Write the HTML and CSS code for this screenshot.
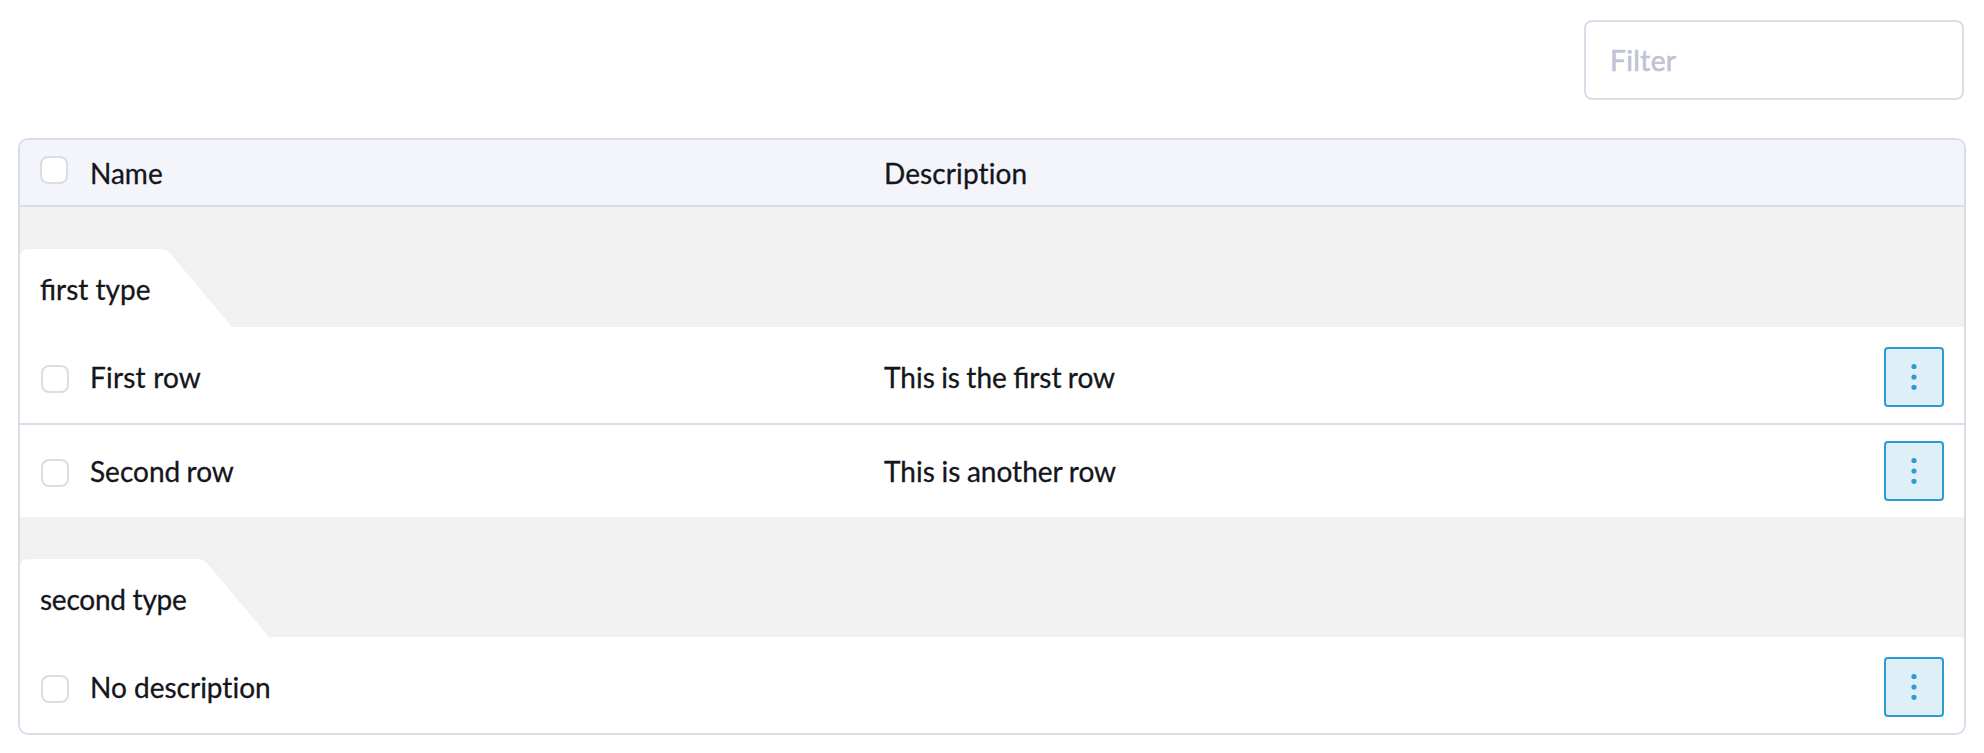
FILE: index.html
```html
<!DOCTYPE html>
<html lang="en">
<head>
<meta charset="utf-8">
<title>Grouped table</title>
<link rel="stylesheet" href="styles.css">
</head>
<body>
<div class="toolbar"><input class="filter" type="text" placeholder="Filter" aria-label="Filter"></div>
<div class="table">
  <div class="row head"><span class="check"></span><span class="name">Name</span><span class="desc plain wide">Description</span></div>
  <div class="group"><div class="tab">first type</div></div>
  <div class="row first divided"><span class="check"></span><span class="name loose">First row</span><span class="desc tight">This is the first row</span>
    <button class="more" aria-label="Actions"><svg width="6" height="28" viewBox="0 0 6 28"><circle cx="3" cy="3.5" r="2.6"/><circle cx="3" cy="14" r="2.6"/><circle cx="3" cy="24.3" r="2.6"/></svg></button></div>
  <div class="row"><span class="check"></span><span class="name tight">Second row</span><span class="desc snug">This is another row</span>
    <button class="more" aria-label="Actions"><svg width="6" height="28" viewBox="0 0 6 28"><circle cx="3" cy="3.5" r="2.6"/><circle cx="3" cy="14" r="2.6"/><circle cx="3" cy="24.3" r="2.6"/></svg></button></div>
  <div class="group"><div class="tab condensed">second type</div></div>
  <div class="row first"><span class="check"></span><span class="name plain">No description</span><span class="desc"></span>
    <button class="more" aria-label="Actions"><svg width="6" height="28" viewBox="0 0 6 28"><circle cx="3" cy="3.5" r="2.6"/><circle cx="3" cy="14" r="2.6"/><circle cx="3" cy="24.3" r="2.6"/></svg></button></div>
</div>
</body>
</html>
```
FILE: styles.css
```css
* { box-sizing: border-box; }
body {
  margin: 0;
  padding: 20px 18px 18px;
  background: #fff;
  color: #15151c;
  font: 400 28px/36px Lato, sans-serif;
  -webkit-text-stroke: 0.3px currentColor;
}
.toolbar {
  display: flex;
  justify-content: flex-end;
  padding-right: 2px;
  margin-bottom: 38px;
}
.filter {
  width: 380px;
  height: 80px;
  padding: 0 24px;
  border: 2px solid #dadde8;
  border-radius: 8px;
  background: #fff;
  font: inherit;
  letter-spacing: 0.4px;
}
.filter::placeholder { color: #bfc3d6; opacity: 1; -webkit-text-stroke: 0.6px #bfc3d6; }
.table {
  border: 2px solid #dadde8;
  border-radius: 10px;
  overflow: hidden;
}
.row {
  display: grid;
  grid-template-columns: 49px 794px 1fr 60px;
  align-items: center;
  height: 92px;
  padding: 0 20px 0 21px;
}
.row.first { height: 96px; padding-top: 4px; }
.row.divided { height: 98px; border-bottom: 2px solid #dadde8; }
.row.head {
  height: 67px;
  padding-left: 20px;
  grid-template-columns: 50px 794px 1fr;
  background: #f4f5fa;
  border-bottom: 2px solid #dadde8;
}
.check {
  width: 28px;
  height: 28px;
  margin-top: 4px;
  border: 2px solid #dadde8;
  border-radius: 8px;
  background: #fff;
}
.head .check { margin: 0 0 5px; }
.head .name, .head .desc { padding-top: 1px; }
.name, .desc { white-space: nowrap; }
.plain { font-variant-ligatures: none; }
.wide { letter-spacing: 0.1px; }
.loose { letter-spacing: 0.2px; }
.tight { word-spacing: -0.8px; }
.snug { word-spacing: -0.5px; }
.condensed { letter-spacing: -0.25px; }
.more {
  display: flex;
  align-items: center;
  justify-content: center;
  width: 60px;
  height: 60px;
  padding: 0;
  border: 2px solid #2d9bd2;
  border-radius: 4px;
  background: #dfeff8;
}
.more svg { fill: #2d9bd2; }
.group {
  display: flex;
  align-items: flex-end;
  height: 120px;
  background: #f1f1f1;
}
.tab {
  position: relative;
  z-index: 0;
  height: 78px;
  padding: 22px 20px 0;
}
.tab::before,
.tab::after {
  content: "";
  position: absolute;
  z-index: -1;
  top: 0;
  height: 78px;
  background: #fff;
}
.tab::before {
  left: 0;
  right: 20px;
  border-top-left-radius: 8px;
}
.tab::after {
  right: -62px;
  width: 90px;
  border-top-right-radius: 5px;
  transform: skewX(40deg);
  transform-origin: bottom;
}
```
